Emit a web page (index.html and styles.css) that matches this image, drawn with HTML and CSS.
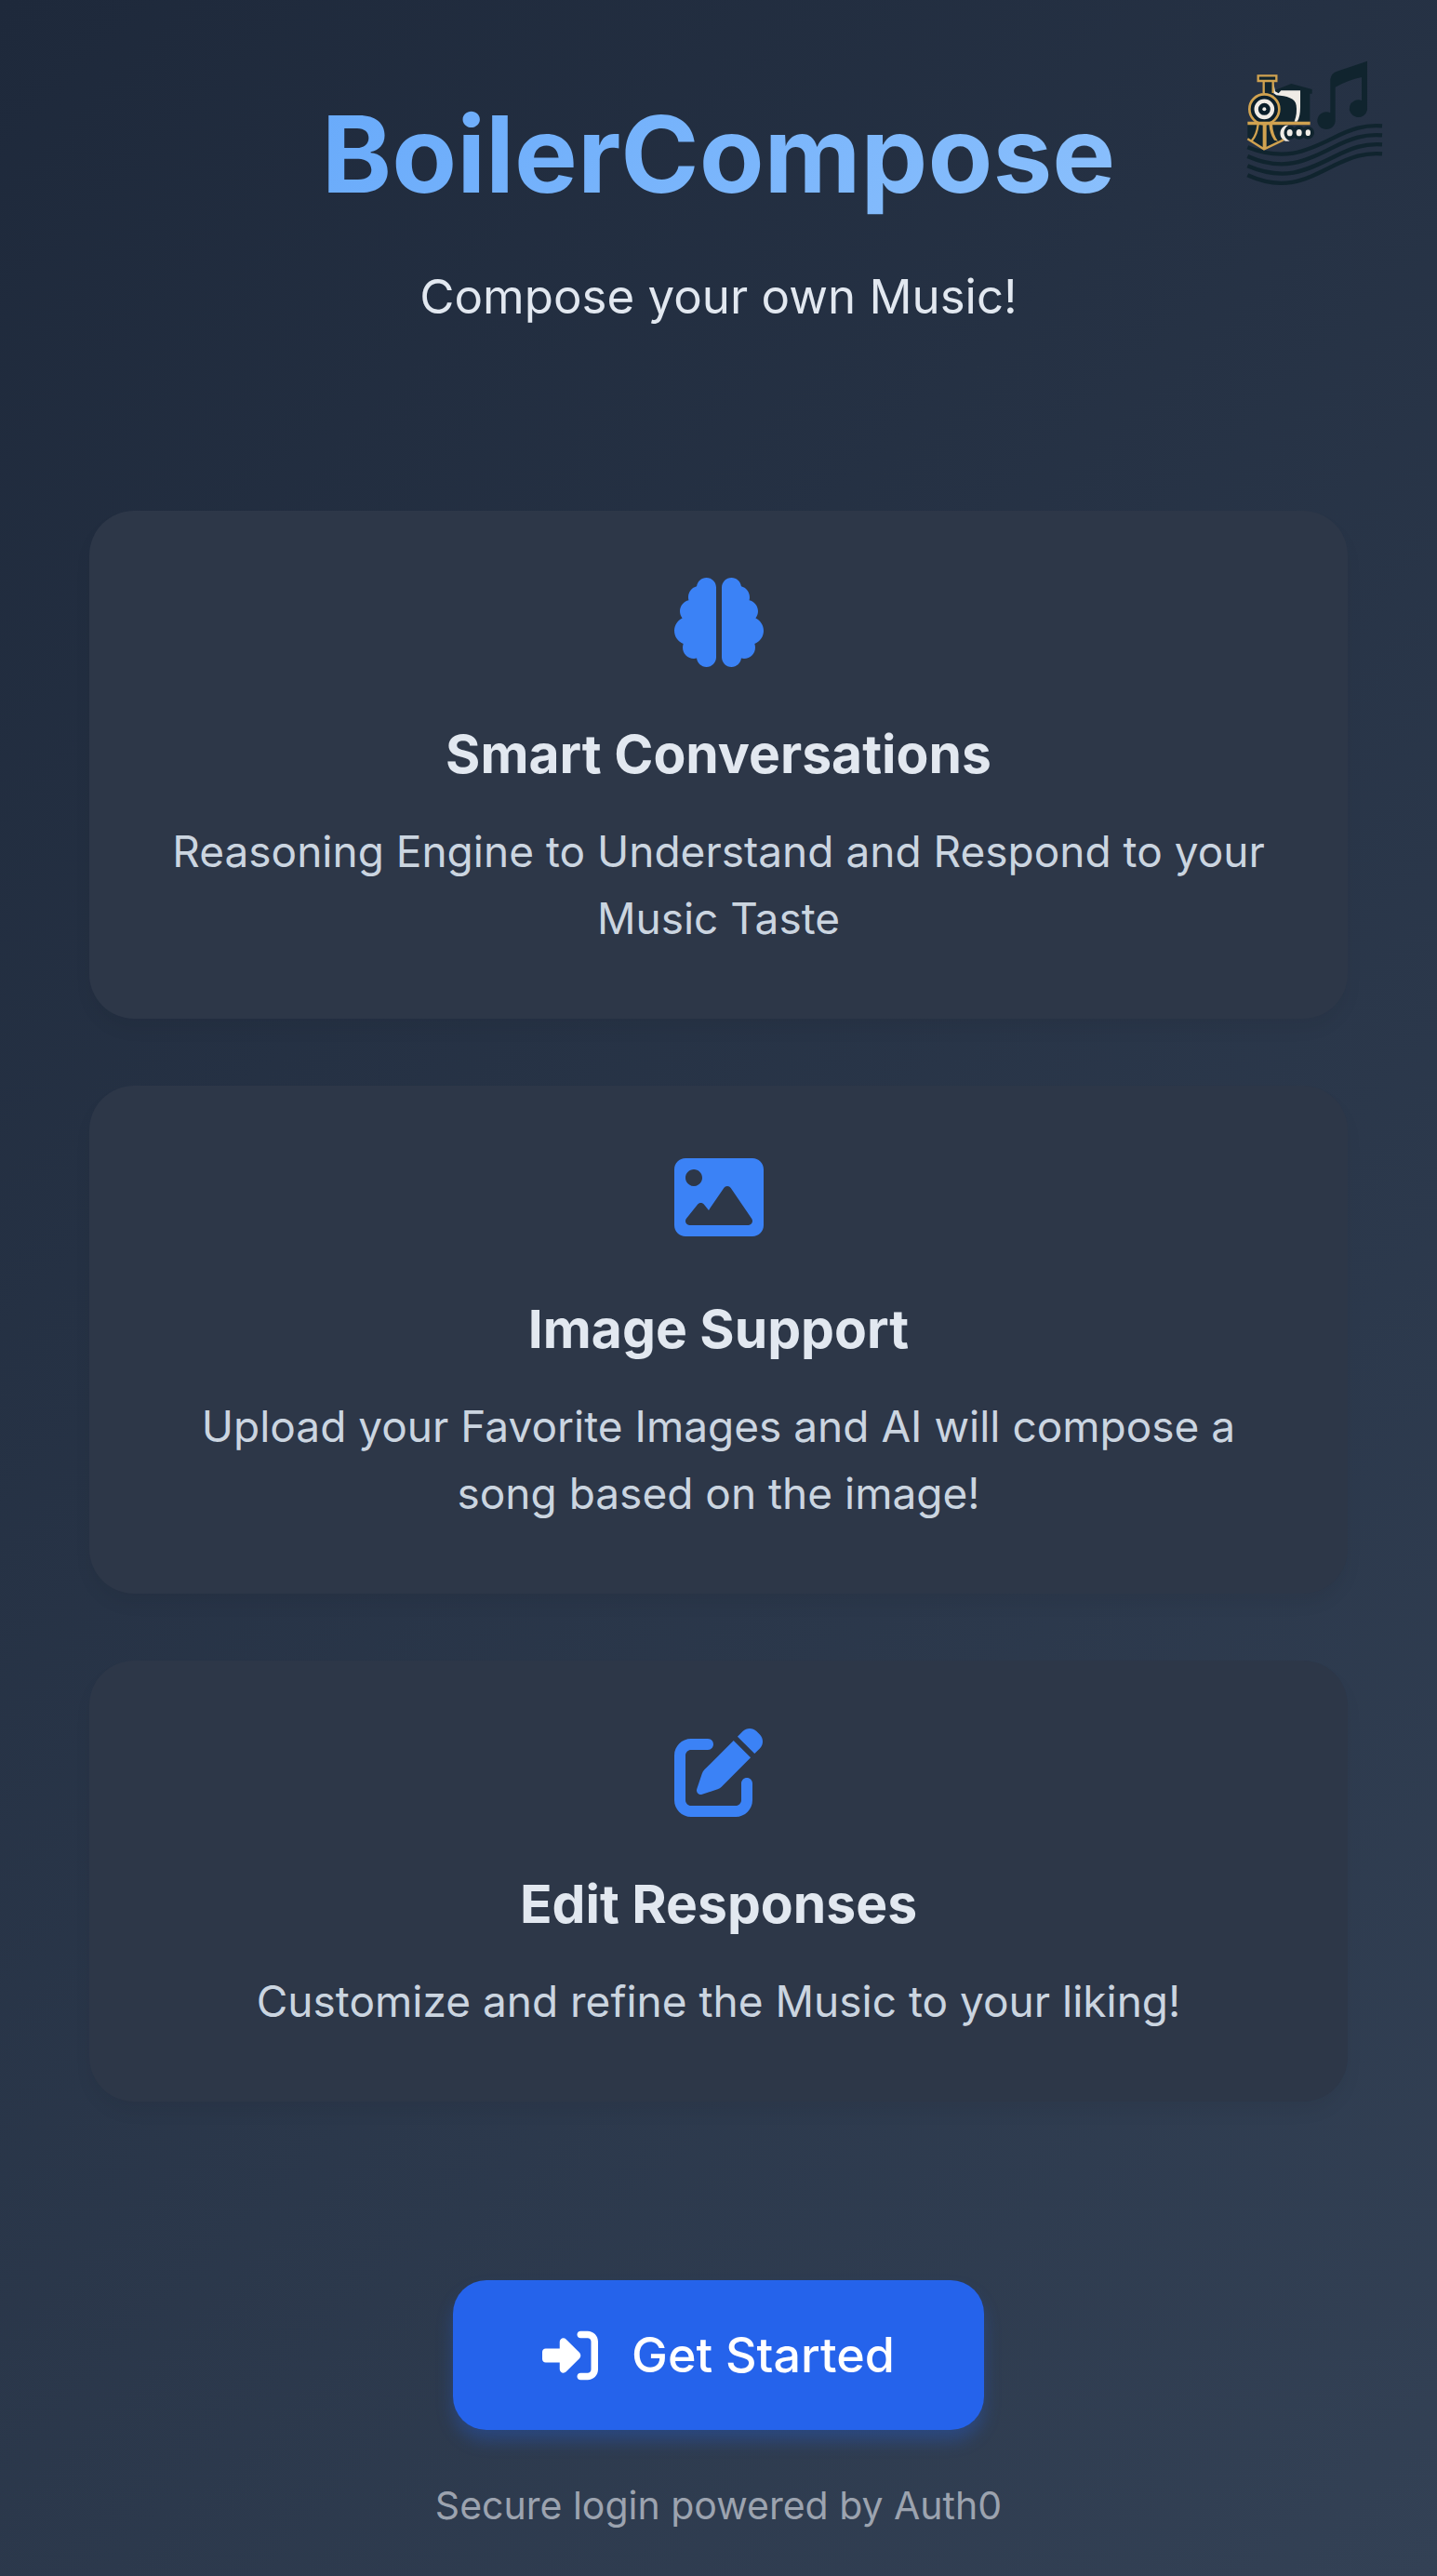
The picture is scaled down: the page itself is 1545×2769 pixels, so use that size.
FILE: index.html
```html
<!DOCTYPE html>
<html lang="en">
<head>
<meta charset="utf-8">
<meta name="viewport" content="width=device-width, initial-scale=1">
<title>BoilerCompose</title>
<link rel="stylesheet" href="styles.css">
</head>
<body>
<div class="page">
  <svg class="logo" viewBox="60 45 441 405" role="img" aria-label="BoilerCompose logo">
    <g class="logo-dark">
      <path d="M331 105Q334 86 352 80L450 47V205A29 28 0 1 1 432 174V99Q388 108 347 131V240A29 28 0 1 1 331 214Z"/>
      <path d="M150 142 205 120 272 138V152H265V242H150Z"/>
      <path d="M113 113H148V155H113Z"/>
      <path d="M98 94H157V111H98Z"/>
      <path d="M64 246H190V300L117 333L64 300Z"/>
      <circle cx="200" cy="278" r="22"/><circle cx="230" cy="278" r="22"/><circle cx="258" cy="278" r="21"/>
    </g>
    <g class="logo-staff">
      <path d="M64 325C180 370 250 340 340 295C400 265 440 252 498 256"/>
      <path d="M64 354C180 405 250 370 340 325C400 295 440 282 498 286"/>
      <path d="M64 385C180 435 250 402 340 357C400 327 440 312 498 316"/>
      <path d="M64 415C180 468 250 430 340 385C400 357 440 341 498 346"/>
    </g>
    <path class="logo-cream" d="M148 118 153 145 164 151 172 142H234V195Q234 228 224 242H215Q225 215 221 190C218 166 190 160 157 157L146 149Z"/>
    <path class="logo-cream" d="M188 254C163 262 164 297 187 305H200C176 293 176 265 196 254Z"/>
    <path class="logo-gold-line" d="M98 94H157V111H98ZM116 112V150M146 112V150"/>
    <circle class="logo-boiler" cx="118" cy="202" r="48"/>
    <circle class="logo-ring" cx="118" cy="202" r="26"/>
    <circle class="logo-cream" cx="118" cy="202" r="6"/>
    <path class="logo-gold" d="M64 242H266V253H64Z"/>
    <path class="logo-gold-line" d="M64 298 117 331 180 301M98 250Q94 285 78 303"/>
    <path class="logo-gold" d="M113 250H125V328H113ZM133 250H144Q146 285 162 305L150 302Q136 285 133 250Z"/>
    <g class="logo-cream"><ellipse cx="200" cy="278" rx="9" ry="11"/><ellipse cx="230" cy="278" rx="9" ry="11"/><ellipse cx="259" cy="278" rx="8" ry="10"/></g>
  </svg>

  <header class="header">
    <h1 class="title">BoilerCompose</h1>
    <p class="subtitle">Compose your own Music!</p>
  </header>

  <main class="features">
    <section class="card">
      <svg class="card-icon" viewBox="0 0 512 512" aria-hidden="true"><path d="M184 0c30.900 0 56 25.100 56 56V456c0 30.900-25.100 56-56 56c-28.900 0-52.700-21.900-55.700-50.100c-5.200 1.400-10.700 2.100-16.300 2.100c-35.300 0-64-28.700-64-64c0-7.400 1.300-14.600 3.600-21.200C21.400 367.400 0 338.200 0 304c0-31.900 18.700-59.500 45.800-72.300C37.100 220.800 32 207 32 192c0-30.700 21.600-56.300 50.400-62.600C80.800 123.900 80 118 80 112c0-29.900 20.600-55.100 48.300-62.100C131.300 21.900 155.100 0 184 0zM328 0c28.900 0 52.600 21.900 55.700 49.900c27.800 7 48.300 32.100 48.300 62.100c0 6-.8 11.900-2.400 17.400c28.800 6.200 50.400 31.900 50.400 62.600c0 15-5.100 28.800-13.800 39.700C493.300 244.500 512 272.100 512 304c0 34.200-21.400 63.400-51.600 74.800c2.300 6.600 3.600 13.800 3.600 21.200c0 35.300-28.700 64-64 64c-5.600 0-11.100-.7-16.300-2.100c-3 28.200-26.800 50.100-55.700 50.100c-30.900 0-56-25.100-56-56V56c0-30.900 25.100-56 56-56z"/></svg>
      <h2 class="card-title">Smart Conversations</h2>
      <p class="card-text">Reasoning Engine to Understand and Respond to your Music Taste</p>
    </section>
    <section class="card">
      <svg class="card-icon" viewBox="0 0 512 512" aria-hidden="true"><path d="M0 96C0 60.700 28.700 32 64 32H448c35.300 0 64 28.700 64 64V416c0 35.300-28.700 64-64 64H64c-35.300 0-64-28.700-64-64V96zM323.800 202.500c-4.500-6.600-11.900-10.500-19.800-10.500s-15.400 3.900-19.800 10.500l-87 127.600L170.700 297c-4.600-5.700-11.500-9-18.700-9s-14.200 3.300-18.700 9l-64 80c-5.800 7.200-6.900 17.100-2.900 25.400s12.400 13.600 21.600 13.600h96 32H424c8.900 0 17.100-4.900 21.200-12.800s3.600-17.400-1.400-24.700l-120-176zM112 192c26.500 0 48-21.500 48-48s-21.500-48-48-48s-48 21.500-48 48s21.500 48 48 48z"/></svg>
      <h2 class="card-title">Image Support</h2>
      <p class="card-text">Upload your Favorite Images and AI will compose a song based on the image!</p>
    </section>
    <section class="card">
      <svg class="card-icon" viewBox="0 0 512 512" aria-hidden="true"><path d="M471.600 21.700c-21.900-21.900-57.300-21.900-79.200 0L362.300 51.700l97.900 97.900 30.100-30.100c21.900-21.900 21.900-57.300 0-79.200L471.600 21.700zm-299.200 220c-6.100 6.100-10.800 13.600-13.500 21.900l-29.600 88.800c-2.900 8.600-.6 18.100 5.800 24.600s15.900 8.700 24.600 5.800l88.800-29.600c8.200-2.700 15.700-7.400 21.900-13.500L437.700 172.300 339.700 74.300 172.400 241.700zM96 64C43 64 0 107 0 160V416c0 53 43 96 96 96H352c53 0 96-43 96-96V320c0-17.700-14.300-32-32-32s-32 14.300-32 32v96c0 17.700-14.300 32-32 32H96c-17.700 0-32-14.300-32-32V160c0-17.700 14.300-32 32-32h96c17.700 0 32-14.300 32-32s-14.300-32-32-32H96z"/></svg>
      <h2 class="card-title">Edit Responses</h2>
      <p class="card-text">Customize and refine the Music to your liking!</p>
    </section>
  </main>

  <footer class="footer">
    <button class="start" type="button">
      <svg class="start-icon" viewBox="0 0 512 512" aria-hidden="true"><path d="M217.900 105.900L340.700 228.700c7.200 7.200 11.300 17.100 11.300 27.300s-4.100 20.100-11.300 27.300L217.900 406.100c-6.400 6.400-15 9.900-24 9.900c-18.700 0-33.900-15.200-33.900-33.900l0-62.100L32 320c-17.700 0-32-14.300-32-32l0-64c0-17.700 14.300-32 32-32l128 0 0-62.100c0-18.700 15.200-33.900 33.900-33.900c9 0 17.600 3.600 24 9.900zM352 416l64 0c17.700 0 32-14.300 32-32l0-256c0-17.700-14.300-32-32-32l-64 0c-17.700 0-32-14.300-32-32s14.300-32 32-32l64 0c53 0 96 43 96 96l0 256c0 53-43 96-96 96l-64 0c-17.700 0-32-14.300-32-32s14.300-32 32-32z"/></svg>
      <span>Get Started</span>
    </button>
    <p class="note">Secure login powered by Auth0</p>
  </footer>
</div>
</body>
</html>
```
FILE: styles.css
```css
* {
  box-sizing: border-box;
}

body {
  margin: 0;
  font-family: Inter, "Liberation Sans", sans-serif;
  color: #e2e8f0;
}

h1, h2, p {
  margin: 0;
}

.page {
  position: relative;
  min-height: 100vh;
  padding: 96px 96px 43px;
  background: linear-gradient(135deg, #1e293b, #334155);
  text-align: center;
}

/* Train and sheet-music logo, pinned over the header corner */
.logo {
  position: absolute;
  top: 65px;
  right: 58px;
  width: 147px;
  height: 135px;
}

.logo-dark {
  fill: #10242e;
}

.logo-staff {
  fill: none;
  stroke: #10242e;
  stroke-width: 13;
}

.logo-cream {
  fill: #f0ece6;
}

.logo-gold {
  fill: #d0a250;
}

.logo-gold-line {
  fill: none;
  stroke: #d0a250;
  stroke-width: 7;
}

.logo-boiler {
  fill: #0b1f2b;
  stroke: #d0a250;
  stroke-width: 8;
}

.logo-ring {
  fill: none;
  stroke: #f0ece6;
  stroke-width: 13;
}

.header {
  display: flex;
  flex-direction: column;
  align-items: center;
  gap: 42px;
}

.title {
  font-size: 114px;
  font-weight: 700;
  line-height: 140px;
  background: linear-gradient(135deg, #60a5fa, #93c5fd);
  background-clip: text;
  -webkit-background-clip: text;
  color: transparent;
  align-self: stretch;
}

.subtitle {
  font-size: 51px;
  line-height: 81px;
}

.features {
  display: grid;
  gap: 72px;
  margin: 190px 0 192px;
}

.card {
  display: flex;
  flex-direction: column;
  align-items: center;
  padding: 72px;
  border-radius: 48px;
  background: #2d3748;
  box-shadow: 0 12px 18px rgba(0, 0, 0, 0.05);
}

.card-icon {
  width: 96px;
  height: 96px;
  margin-bottom: 48px;
  fill: #3b82f6;
}

.card-title {
  margin-bottom: 22px;
  font-size: 57px;
  font-weight: 700;
  line-height: 92px;
}

.card-text {
  font-size: 46px;
  line-height: 72px;
  color: #cbd5e0;
}

.footer {
  display: flex;
  flex-direction: column;
  align-items: center;
  gap: 50px;
}

.start {
  display: flex;
  align-items: center;
  gap: 36px;
  padding: 40px 96px;
  border: 0;
  border-radius: 36px;
  background: #2563eb;
  box-shadow: 0 12px 18px rgba(37, 99, 235, 0.3);
  color: #fff;
  font-family: inherit;
  font-size: 52px;
  font-weight: 500;
  line-height: 81px;
}

.start-icon {
  width: 60px;
  height: 60px;
  fill: currentColor;
}

.note {
  font-size: 41px;
  line-height: 63px;
  color: #9ca3af;
}
```
